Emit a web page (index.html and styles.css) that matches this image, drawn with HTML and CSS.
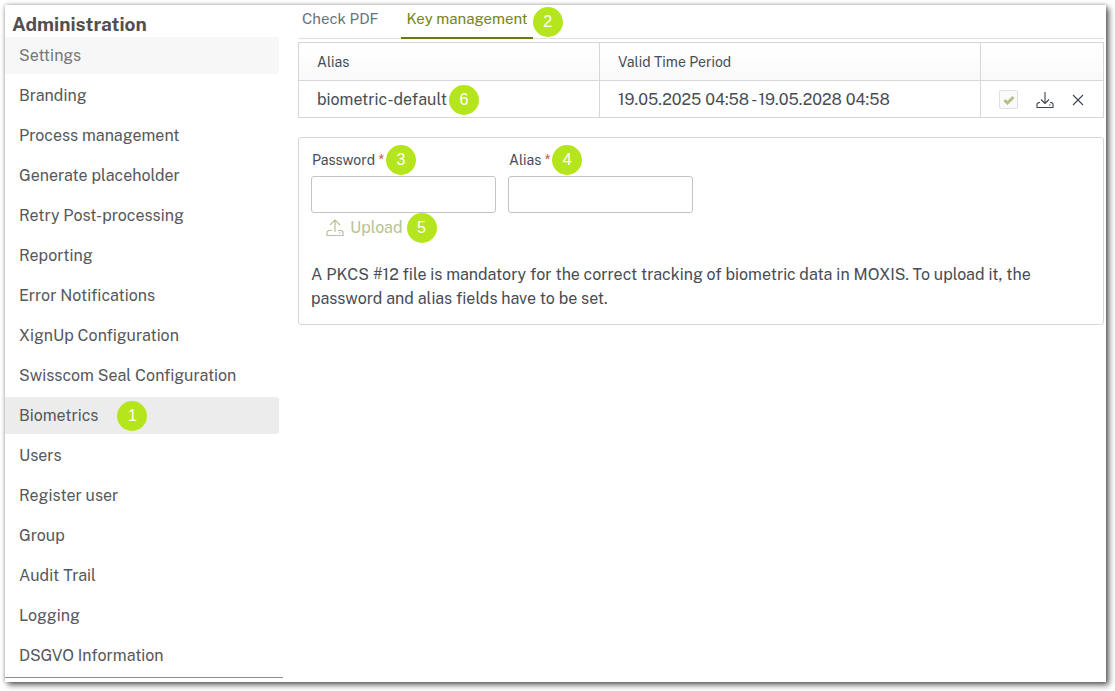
FILE: index.html
```html
<!DOCTYPE html>
<html lang="en">
<head>
    <meta charset="UTF-8">
    <title>Administration</title>
    <link rel="stylesheet" href="styles.css">
</head>
<body>
    <div class="window">
        <div class="sidebar">
            <h1>Administration</h1>
            <ul class="menu">
                <li><a class="section" href="#">Settings</a></li>
                <li><a href="#">Branding</a></li>
                <li><a href="#">Process management</a></li>
                <li><a href="#">Generate placeholder</a></li>
                <li><a href="#">Retry Post-processing</a></li>
                <li><a href="#">Reporting</a></li>
                <li><a href="#">Error Notifications</a></li>
                <li><a href="#">XignUp Configuration</a></li>
                <li><a href="#">Swisscom Seal Configuration</a></li>
                <li><a class="active" href="#">Biometrics <span class="badge">1</span></a></li>
                <li><a href="#">Users</a></li>
                <li><a href="#">Register user</a></li>
                <li><a href="#">Group</a></li>
                <li><a href="#">Audit Trail</a></li>
                <li><a href="#">Logging</a></li>
                <li><a href="#">DSGVO Information</a></li>
            </ul>
        </div>
        <div class="main">
            <div class="tabs">
                <button type="button" class="tab">Check PDF</button>
                <button type="button" class="tab current">Key management</button>
                <span class="badge">2</span>
            </div>
            <table class="keys">
                <colgroup>
                    <col class="col-alias">
                    <col class="col-period">
                    <col class="col-actions">
                </colgroup>
                <thead>
                    <tr>
                        <th>Alias</th>
                        <th>Valid Time Period</th>
                        <th></th>
                    </tr>
                </thead>
                <tbody>
                    <tr>
                        <td><div class="cell">biometric-default<span class="badge">6</span></div></td>
                        <td>19.05.2025 04:58 - 19.05.2028 04:58</td>
                        <td>
                            <div class="actions">
                                <label class="check">
                                    <input type="checkbox" aria-label="Default key" checked disabled>
                                    <svg width="12" height="10" viewBox="0 0 12 10"><path d="M1.500 5l3 3L10.500 2" fill="none" stroke="#b4c08a" stroke-width="3"/></svg>
                                </label>
                                <button type="button" class="icon" aria-label="Download">
                                    <svg width="18" height="18" viewBox="0 0 18 18" fill="none" stroke="#3d4650" stroke-width="1.100"><path d="M9 1v11M5 8.500l4 4 4-4M4 11.500H2.500L1 13v3.500h16V13l-1.500-1.500H14M13 14h1.500"/></svg>
                                </button>
                                <button type="button" class="icon" aria-label="Delete">
                                    <svg width="12" height="12" viewBox="0 0 12 12" fill="none" stroke="#3d4650" stroke-width="1.100"><path d="M1 1l10 10M11 1L1 11"/></svg>
                                </button>
                            </div>
                        </td>
                    </tr>
                </tbody>
            </table>
            <form class="upload">
                <div class="fields">
                    <div class="field">
                        <div class="caption"><label for="password">Password <i>*</i></label><span class="badge">3</span></div>
                        <input type="password" id="password">
                    </div>
                    <div class="field">
                        <div class="caption"><label for="alias">Alias <i>*</i></label><span class="badge">4</span></div>
                        <input type="text" id="alias">
                    </div>
                </div>
                <div class="send">
                    <button type="button" disabled>
                        <svg width="18" height="18" viewBox="0 0 18 18" fill="none" stroke="#b8c391" stroke-width="1.200"><path d="M9 13V1.500M4 6L9 1l5 5M6 11.500H2.500L1 13v3.500h16V13l-1.500-1.500H12M13 14h1.500"/></svg>
                        Upload
                    </button>
                    <span class="badge">5</span>
                </div>
                <p>A PKCS #12 file is mandatory for the correct tracking of biometric data in MOXIS. To upload it, the password and alias fields have to be set.</p>
            </form>
        </div>
    </div>
</body>
</html>
```

FILE: styles.css
```css
*{
    margin: 0;
    padding: 0;
    box-sizing: border-box;
}
body{
    background: #fff;
    color: #474d54;
    font: 16px/24px "Public Sans", Inter, "Liberation Sans", sans-serif;
}
button, input{
    font: inherit;
    color: inherit;
}
button{
    background: none;
    border: none;
}
.window{
    display: flex;
    min-height: calc(100vh - 14px);
    margin: 5px 9px 9px 5px;
    background: #fff;
    box-shadow: 3px 3px 6px rgba(0,0,0,0.6), 0 0 4px rgba(0,0,0,0.3);
}
.sidebar{
    width: 278px;
    flex-shrink: 0;
    align-self: flex-start;
    border-bottom: 1px solid #8e8e8e;
}
h1{
    padding: 7px 7px 1px;
    font-size: 19px;
    line-height: 24px;
    font-weight: 700;
    color: #505050;
}
.menu{
    display: flex;
    flex-direction: column;
    gap: 3px;
    padding: 0 4px 3px 0;
    list-style: none;
}
.menu a{
    display: flex;
    align-items: center;
    gap: 19px;
    height: 37px;
    padding-left: 14px;
    border-radius: 0 3px 3px 0;
    color: #56585b;
    text-decoration: none;
}
.menu .section{
    background: #f7f7f7;
    color: #747679;
}
.menu .active{
    background: #ececec;
}
.badge{
    flex-shrink: 0;
    width: 30px;
    height: 30px;
    border-radius: 50%;
    background: #b5e61d;
    color: #fff;
    font: 16px/30px "Liberation Sans", sans-serif;
    text-align: center;
}
.main{
    flex: 1;
    padding: 0 2px 0 15px;
}
.tabs{
    display: flex;
    align-items: center;
    height: 34px;
    margin-bottom: 3px;
    border-bottom: 1px solid #e0e0e0;
}
.tab{
    height: 34px;
    padding: 0 4px 6px;
    font-size: 15px;
    color: #68737d;
}
.tab.current{
    margin-left: 19px;
    padding: 0 5px 4px;
    border-bottom: 2px solid #6b7a0c;
    color: #77860f;
}
.keys{
    width: 100%;
    table-layout: fixed;
    border-collapse: collapse;
    margin-bottom: 19px;
}
.col-alias{
    width: 37.4%;
}
.col-actions{
    width: 123px;
}
.keys th, .keys td{
    height: 37px;
    padding: 0 18px;
    border: 1px solid #d7d7d7;
    text-align: left;
    font-weight: normal;
}
.keys td{
    padding-top: 1px;
}
.keys th{
    height: 38px;
    background: linear-gradient(#fff, #f9f9f9);
    font-size: 14px;
}
.cell, .actions{
    display: flex;
    align-items: center;
}
.cell{
    gap: 2px;
}
.actions{
    gap: 18px;
}
.check{
    display: grid;
    place-items: center;
}
.check input, .check svg{
    grid-area: 1 / 1;
}
.check input{
    appearance: none;
    width: 19px;
    height: 19px;
    border: 1px solid #e0e0e0;
    border-radius: 2px;
    background: #fafafa;
}
.icon{
    display: flex;
}
.upload{
    padding: 7px 12px 13px;
    border: 1px solid #d7d7d7;
    border-radius: 3px;
}
.fields{
    display: flex;
    gap: 12px;
}
.field{
    width: 185px;
}
.caption{
    display: flex;
    align-items: center;
    gap: 2px;
    padding-left: 1px;
    font-size: 14px;
}
.caption i{
    color: #c8503c;
    font-style: normal;
}
.field input{
    display: block;
    width: 100%;
    height: 37px;
    margin-top: 1px;
    padding: 0 8px;
    border: 1px solid #c4c4c4;
    border-radius: 3px;
}
.send{
    display: flex;
    align-items: center;
    gap: 4px;
    height: 29px;
    margin-bottom: 21px;
    padding-left: 15px;
}
.send button{
    display: flex;
    align-items: center;
    gap: 6px;
    color: #b8c391;
}
```
